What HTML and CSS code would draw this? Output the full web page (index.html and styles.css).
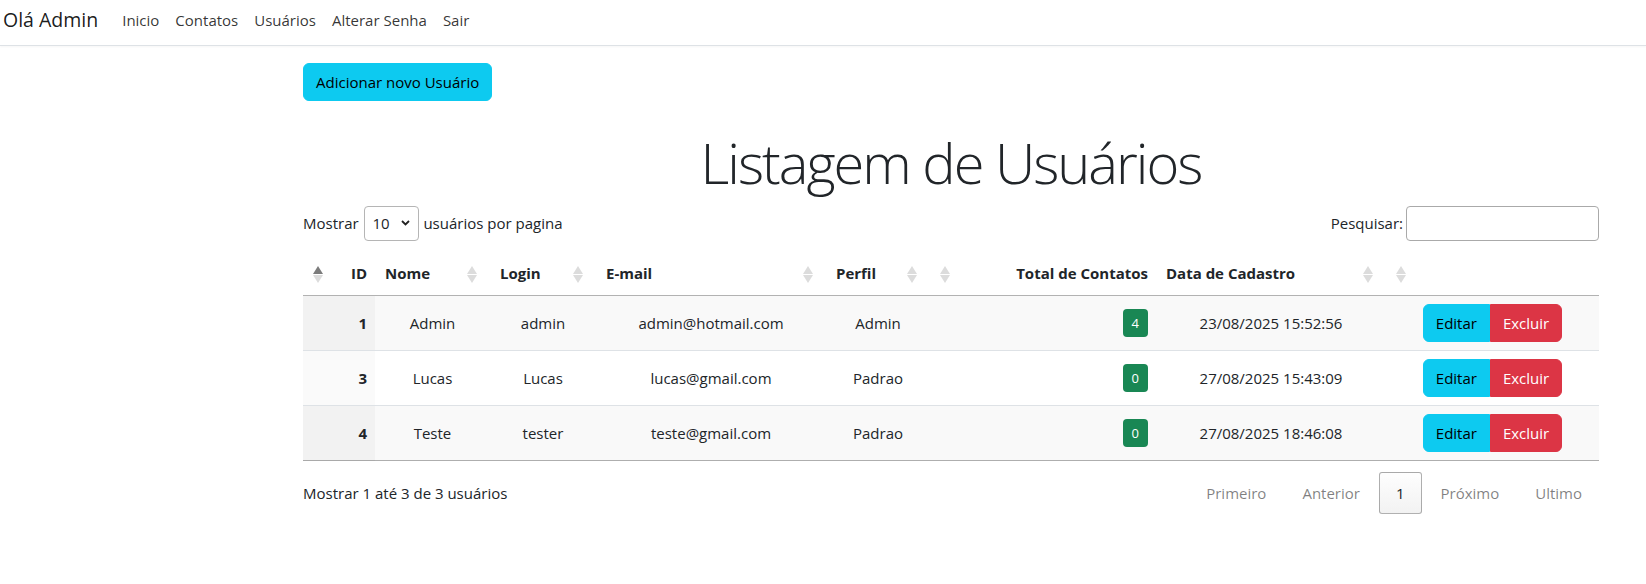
FILE: index.html
```html
<!DOCTYPE html>
<html lang="pt-BR">
<head>
<meta charset="utf-8">
<title>Listagem de Usuários</title>
<link rel="stylesheet" href="styles.css">
</head>
<body>
<nav class="navbar">
  <a class="brand" href="#">Olá Admin</a>
  <ul class="nav">
    <li><a class="nav-link" href="#">Inicio</a></li>
    <li><a class="nav-link" href="#">Contatos</a></li>
    <li><a class="nav-link" href="#">Usuários</a></li>
    <li><a class="nav-link" href="#">Alterar Senha</a></li>
    <li><a class="nav-link" href="#">Sair</a></li>
  </ul>
</nav>

<main class="main">
  <div class="toolbar">
    <button class="btn btn-info" type="button">Adicionar novo Usuário</button>
  </div>

  <h1 class="title">Listagem de Usuários</h1>

  <div class="dt-top">
    <label class="dt-length">Mostrar <select class="dt-select"><option>10</option><option>25</option><option>50</option></select> usuários por pagina</label>
    <label class="dt-search">Pesquisar:<input class="dt-input" type="search"></label>
  </div>

  <table class="dt">
    <colgroup>
      <col class="c-id"><col class="c-nome"><col class="c-login"><col class="c-email"><col class="c-perfil"><col class="c-total"><col class="c-data"><col class="c-acoes">
    </colgroup>
    <thead>
      <tr>
        <th class="num"><div class="th"><span>ID</span><svg class="sort active" width="10" height="17" viewBox="0 0 10 17"><path class="up" d="M5 0L10 8H0Z"/><path class="down" d="M0 9H10L5 17Z"/></svg></div></th>
        <th><div class="th"><span>Nome</span><svg class="sort" width="10" height="17" viewBox="0 0 10 17"><path class="up" d="M5 0L10 8H0Z"/><path class="down" d="M0 9H10L5 17Z"/></svg></div></th>
        <th><div class="th"><span>Login</span><svg class="sort" width="10" height="17" viewBox="0 0 10 17"><path class="up" d="M5 0L10 8H0Z"/><path class="down" d="M0 9H10L5 17Z"/></svg></div></th>
        <th><div class="th"><span>E-mail</span><svg class="sort" width="10" height="17" viewBox="0 0 10 17"><path class="up" d="M5 0L10 8H0Z"/><path class="down" d="M0 9H10L5 17Z"/></svg></div></th>
        <th><div class="th"><span>Perfil</span><svg class="sort" width="10" height="17" viewBox="0 0 10 17"><path class="up" d="M5 0L10 8H0Z"/><path class="down" d="M0 9H10L5 17Z"/></svg></div></th>
        <th class="num"><div class="th"><span>Total de Contatos</span><svg class="sort" width="10" height="17" viewBox="0 0 10 17"><path class="up" d="M5 0L10 8H0Z"/><path class="down" d="M0 9H10L5 17Z"/></svg></div></th>
        <th><div class="th"><span>Data de Cadastro</span><svg class="sort" width="10" height="17" viewBox="0 0 10 17"><path class="up" d="M5 0L10 8H0Z"/><path class="down" d="M0 9H10L5 17Z"/></svg></div></th>
        <th class="num"><div class="th"><span></span><svg class="sort" width="10" height="17" viewBox="0 0 10 17"><path class="up" d="M5 0L10 8H0Z"/><path class="down" d="M0 9H10L5 17Z"/></svg></div></th>
      </tr>
    </thead>
    <tbody>
      <tr class="odd">
        <td class="id sorted">1</td>
        <td>Admin</td>
        <td>admin</td>
        <td>admin@hotmail.com</td>
        <td>Admin</td>
        <td class="right"><span class="badge">4</span></td>
        <td>23/08/2025 15:52:56</td>
        <td><div class="btn-group"><button class="btn btn-info btn-left" type="button">Editar</button><button class="btn btn-danger btn-right" type="button">Excluir</button></div></td>
      </tr>
      <tr class="even">
        <td class="id sorted">3</td>
        <td>Lucas</td>
        <td>Lucas</td>
        <td>lucas@gmail.com</td>
        <td>Padrao</td>
        <td class="right"><span class="badge">0</span></td>
        <td>27/08/2025 15:43:09</td>
        <td><div class="btn-group"><button class="btn btn-info btn-left" type="button">Editar</button><button class="btn btn-danger btn-right" type="button">Excluir</button></div></td>
      </tr>
      <tr class="odd">
        <td class="id sorted">4</td>
        <td>Teste</td>
        <td>tester</td>
        <td>teste@gmail.com</td>
        <td>Padrao</td>
        <td class="right"><span class="badge">0</span></td>
        <td>27/08/2025 18:46:08</td>
        <td><div class="btn-group"><button class="btn btn-info btn-left" type="button">Editar</button><button class="btn btn-danger btn-right" type="button">Excluir</button></div></td>
      </tr>
    </tbody>
  </table>

  <div class="dt-bottom">
    <div class="dt-info">Mostrar 1 até 3 de 3 usuários</div>
    <nav class="dt-paging">
      <span class="page disabled">Primeiro</span>
      <span class="page disabled">Anterior</span>
      <span class="page current">1</span>
      <span class="page disabled">Próximo</span>
      <span class="page disabled">Ultimo</span>
    </nav>
  </div>
</main>
</body>
</html>
```

FILE: styles.css
```css
* { box-sizing: border-box; }

html, body {
  margin: 0;
  padding: 0;
  background: #fff;
}

body {
  font-family: "Open Sans", "Noto Sans", sans-serif;
  font-size: 15px;
  line-height: 24px;
  color: #212529;
}

/* Navbar */
.navbar {
  display: flex;
  align-items: flex-start;
  height: 46px;
  padding: 0 0 5px 0;
  border-bottom: 1px solid #dee2e6;
  box-shadow: 0 1px 2px rgba(0, 0, 0, 0.04);
}

.brand {
  display: block;
  margin-left: 3px;
  margin-right: 16px;
  padding: 5px 0;
  font-size: 19.5px;
  line-height: 30px;
  color: rgba(0, 0, 0, 0.9);
  text-decoration: none;
}

.nav {
  display: flex;
  list-style: none;
  margin: 0;
  padding: 0;
}

.nav-link {
  display: block;
  padding: 8px 8px;
  color: rgba(0, 0, 0, 0.8);
  text-decoration: none;
}

/* Main */
.main {
  width: 1296px;
  margin-left: 303px;
}

.toolbar {
  padding-top: 17px;
}

.btn {
  display: inline-block;
  font-family: inherit;
  font-size: 15px;
  line-height: 24px;
  padding: 6px 12px;
  border: 1px solid transparent;
  border-radius: 6px;
  cursor: pointer;
}

.btn-info {
  background: #0dcaf0;
  border-color: #0dcaf0;
  color: #000;
}

.btn-danger {
  background: #dc3545;
  border-color: #dc3545;
  color: #fff;
}

.title {
  margin: 23px 0 4px;
  font-size: 56px;
  font-weight: 300;
  letter-spacing: -2px;
  line-height: 77px;
  text-align: center;
  color: #212529;
}

/* DataTables top controls */
.dt-top {
  display: flex;
  justify-content: space-between;
  align-items: center;
  height: 36px;
}

.dt-length, .dt-search {
  display: flex;
  align-items: center;
  white-space: pre;
}

.dt-select {
  appearance: none;
  -webkit-appearance: none;
  width: 55px;
  height: 35px;
  margin: 0 1px;
  padding: 4px 20px 4px 8px;
  font-family: inherit;
  font-size: 15px;
  color: #212529;
  border: 1px solid #b5b5b5;
  border-radius: 4px;
  background: #fff url("data:image/svg+xml;utf8,<svg xmlns='http://www.w3.org/2000/svg' width='9' height='6' viewBox='0 0 9 6'><path d='M1 1l3.5 3.5L8 1' fill='none' stroke='%23222' stroke-width='1.8'/></svg>") no-repeat right 8px center;
}

.dt-input {
  width: 193px;
  height: 35px;
  margin-left: 3px;
  padding: 5px;
  font-family: inherit;
  font-size: 15px;
  border: 1px solid #aaa;
  border-radius: 4px;
  background: transparent;
}

/* Table */
.dt {
  width: 1296px;
  margin-top: 14px;
  border-collapse: collapse;
  table-layout: fixed;
}

.c-id { width: 72px; }
.c-nome { width: 115px; }
.c-login { width: 106px; }
.c-email { width: 230px; }
.c-perfil { width: 104px; }
.c-total { width: 226px; }
.c-data { width: 230px; }
.c-acoes { width: 213px; }

.dt th {
  padding: 6px 13px 10px 10px;
  height: 40px;
  font-weight: 700;
  text-align: left;
  border-bottom: 1px solid rgba(0, 0, 0, 0.3);
}

.dt th.num {
  padding: 6px 8px 10px 10px;
}

.th {
  display: flex;
  align-items: center;
  justify-content: space-between;
}

.dt th.num .th {
  flex-direction: row-reverse;
}

.sort { display: block; flex: none; margin-top: 2px; }
.sort path { fill: #dcdcdc; }
.sort.active .up { fill: #7c7c7c; }

.dt td {
  padding: 8px;
  height: 55px;
  text-align: center;
  vertical-align: middle;
  border-bottom: 1px solid #dee2e6;
}

.dt tbody tr:last-child td {
  border-bottom: 1px solid rgba(0, 0, 0, 0.3);
}

.dt tr.odd td { background: #f9f9f9; }
.dt tr.odd td.sorted { background: #f2f2f2; }
.dt tr.even td.sorted { background: #fafafa; }

.dt td.id {
  text-align: right;
  font-weight: 700;
}

.dt td.right { text-align: right; }

.badge {
  display: inline-block;
  padding: 4px 9px;
  font-size: 13px;
  line-height: 20px;
  color: #fff;
  background: #198754;
  border-radius: 4px;
}

.btn-group {
  display: inline-flex;
}

.btn-left { border-radius: 6px 0 0 6px; }
.btn-right { border-radius: 0 6px 6px 0; }

/* Bottom */
.dt-bottom {
  display: flex;
  justify-content: space-between;
  align-items: center;
  margin-top: 11px;
}

.dt-paging {
  display: flex;
}

.page {
  display: inline-block;
  margin-left: 2px;
  padding: 8px 16px;
  min-width: 24px;
  text-align: center;
  border: 1px solid transparent;
  border-radius: 3px;
  line-height: 24px;
}

.page.disabled {
  color: rgba(0, 0, 0, 0.5);
}

.page.current {
  color: #212529;
  border-color: rgba(0, 0, 0, 0.3);
  background: linear-gradient(to bottom, rgba(230, 230, 230, 0.05) 0%, rgba(0, 0, 0, 0.05) 100%);
}
```
